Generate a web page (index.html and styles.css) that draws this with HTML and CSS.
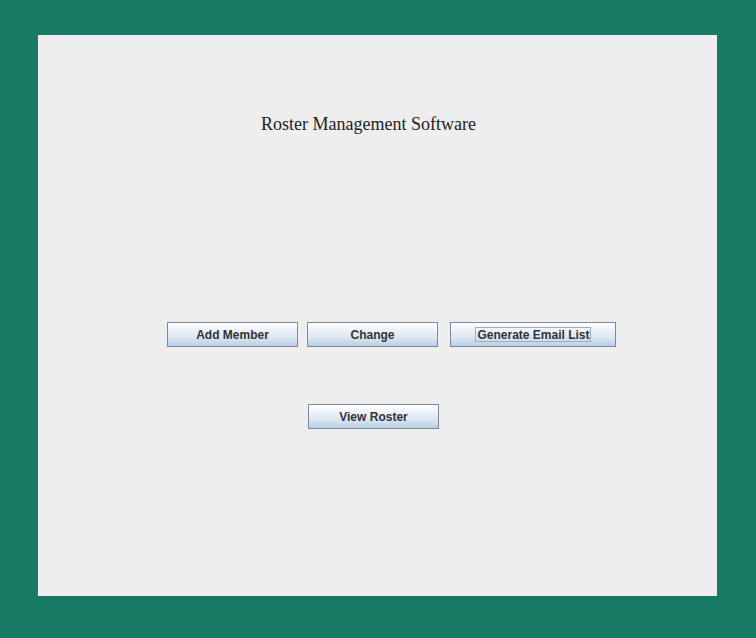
FILE: index.html
```html
<!DOCTYPE html>
<html>
<head>
<meta charset="utf-8">
<link rel="stylesheet" href="styles.css">
</head>
<body>
<div class="frame">
  <div class="panel">
    <div class="title">Roster Management Software</div>
    <div class="row row-main">
      <button class="btn">Add Member</button>
      <button class="btn btn-change">Change</button>
      <button class="btn btn-wide"><span class="focus">Generate Email List</span></button>
    </div>
    <div class="row row-view">
      <button class="btn">View Roster</button>
    </div>
  </div>
</div>
</body>
</html>
```
FILE: styles.css
```css
html, body {
  margin: 0;
  padding: 0;
  background: #167B62;
}
.frame {
  width: 756px;
  height: 638px;
  box-sizing: border-box;
  padding: 35px 39px 42px 38px;
}
.panel {
  width: 679px;
  height: 561px;
  background: #EEEEEE;
  display: flex;
  flex-direction: column;
  align-items: flex-start;
}
.title {
  font-family: "Liberation Serif", "Times New Roman", serif;
  font-size: 18px;
  line-height: 21px;
  color: #222;
  margin-top: 79px;
  margin-left: 223px;
}
.row {
  display: flex;
  align-items: center;
}
.row-main {
  margin-top: 187px;
  margin-left: 129px;
}
.row-view {
  margin-top: 57px;
  margin-left: 270px;
}
.btn {
  width: 131px;
  height: 25px;
  box-sizing: border-box;
  border: 1px solid #7A8A99;
  background: linear-gradient(to bottom, #FFFFFF 0%, #EEF3F9 30%, #DDE8F3 60%, #B8CFE5 100%);
  font-family: "Liberation Sans", Arial, sans-serif;
  font-weight: bold;
  font-size: 12px;
  color: #333333;
  padding: 0;
  margin: 0;
  display: flex;
  align-items: center;
  justify-content: center;
}
.btn-change {
  margin-left: 9px;
}
.btn-wide {
  width: 166px;
  margin-left: 12px;
}
.focus {
  border: 1px solid #9AAFC4;
  padding: 1px 0 0 1px;
  line-height: 12px;
}
```
